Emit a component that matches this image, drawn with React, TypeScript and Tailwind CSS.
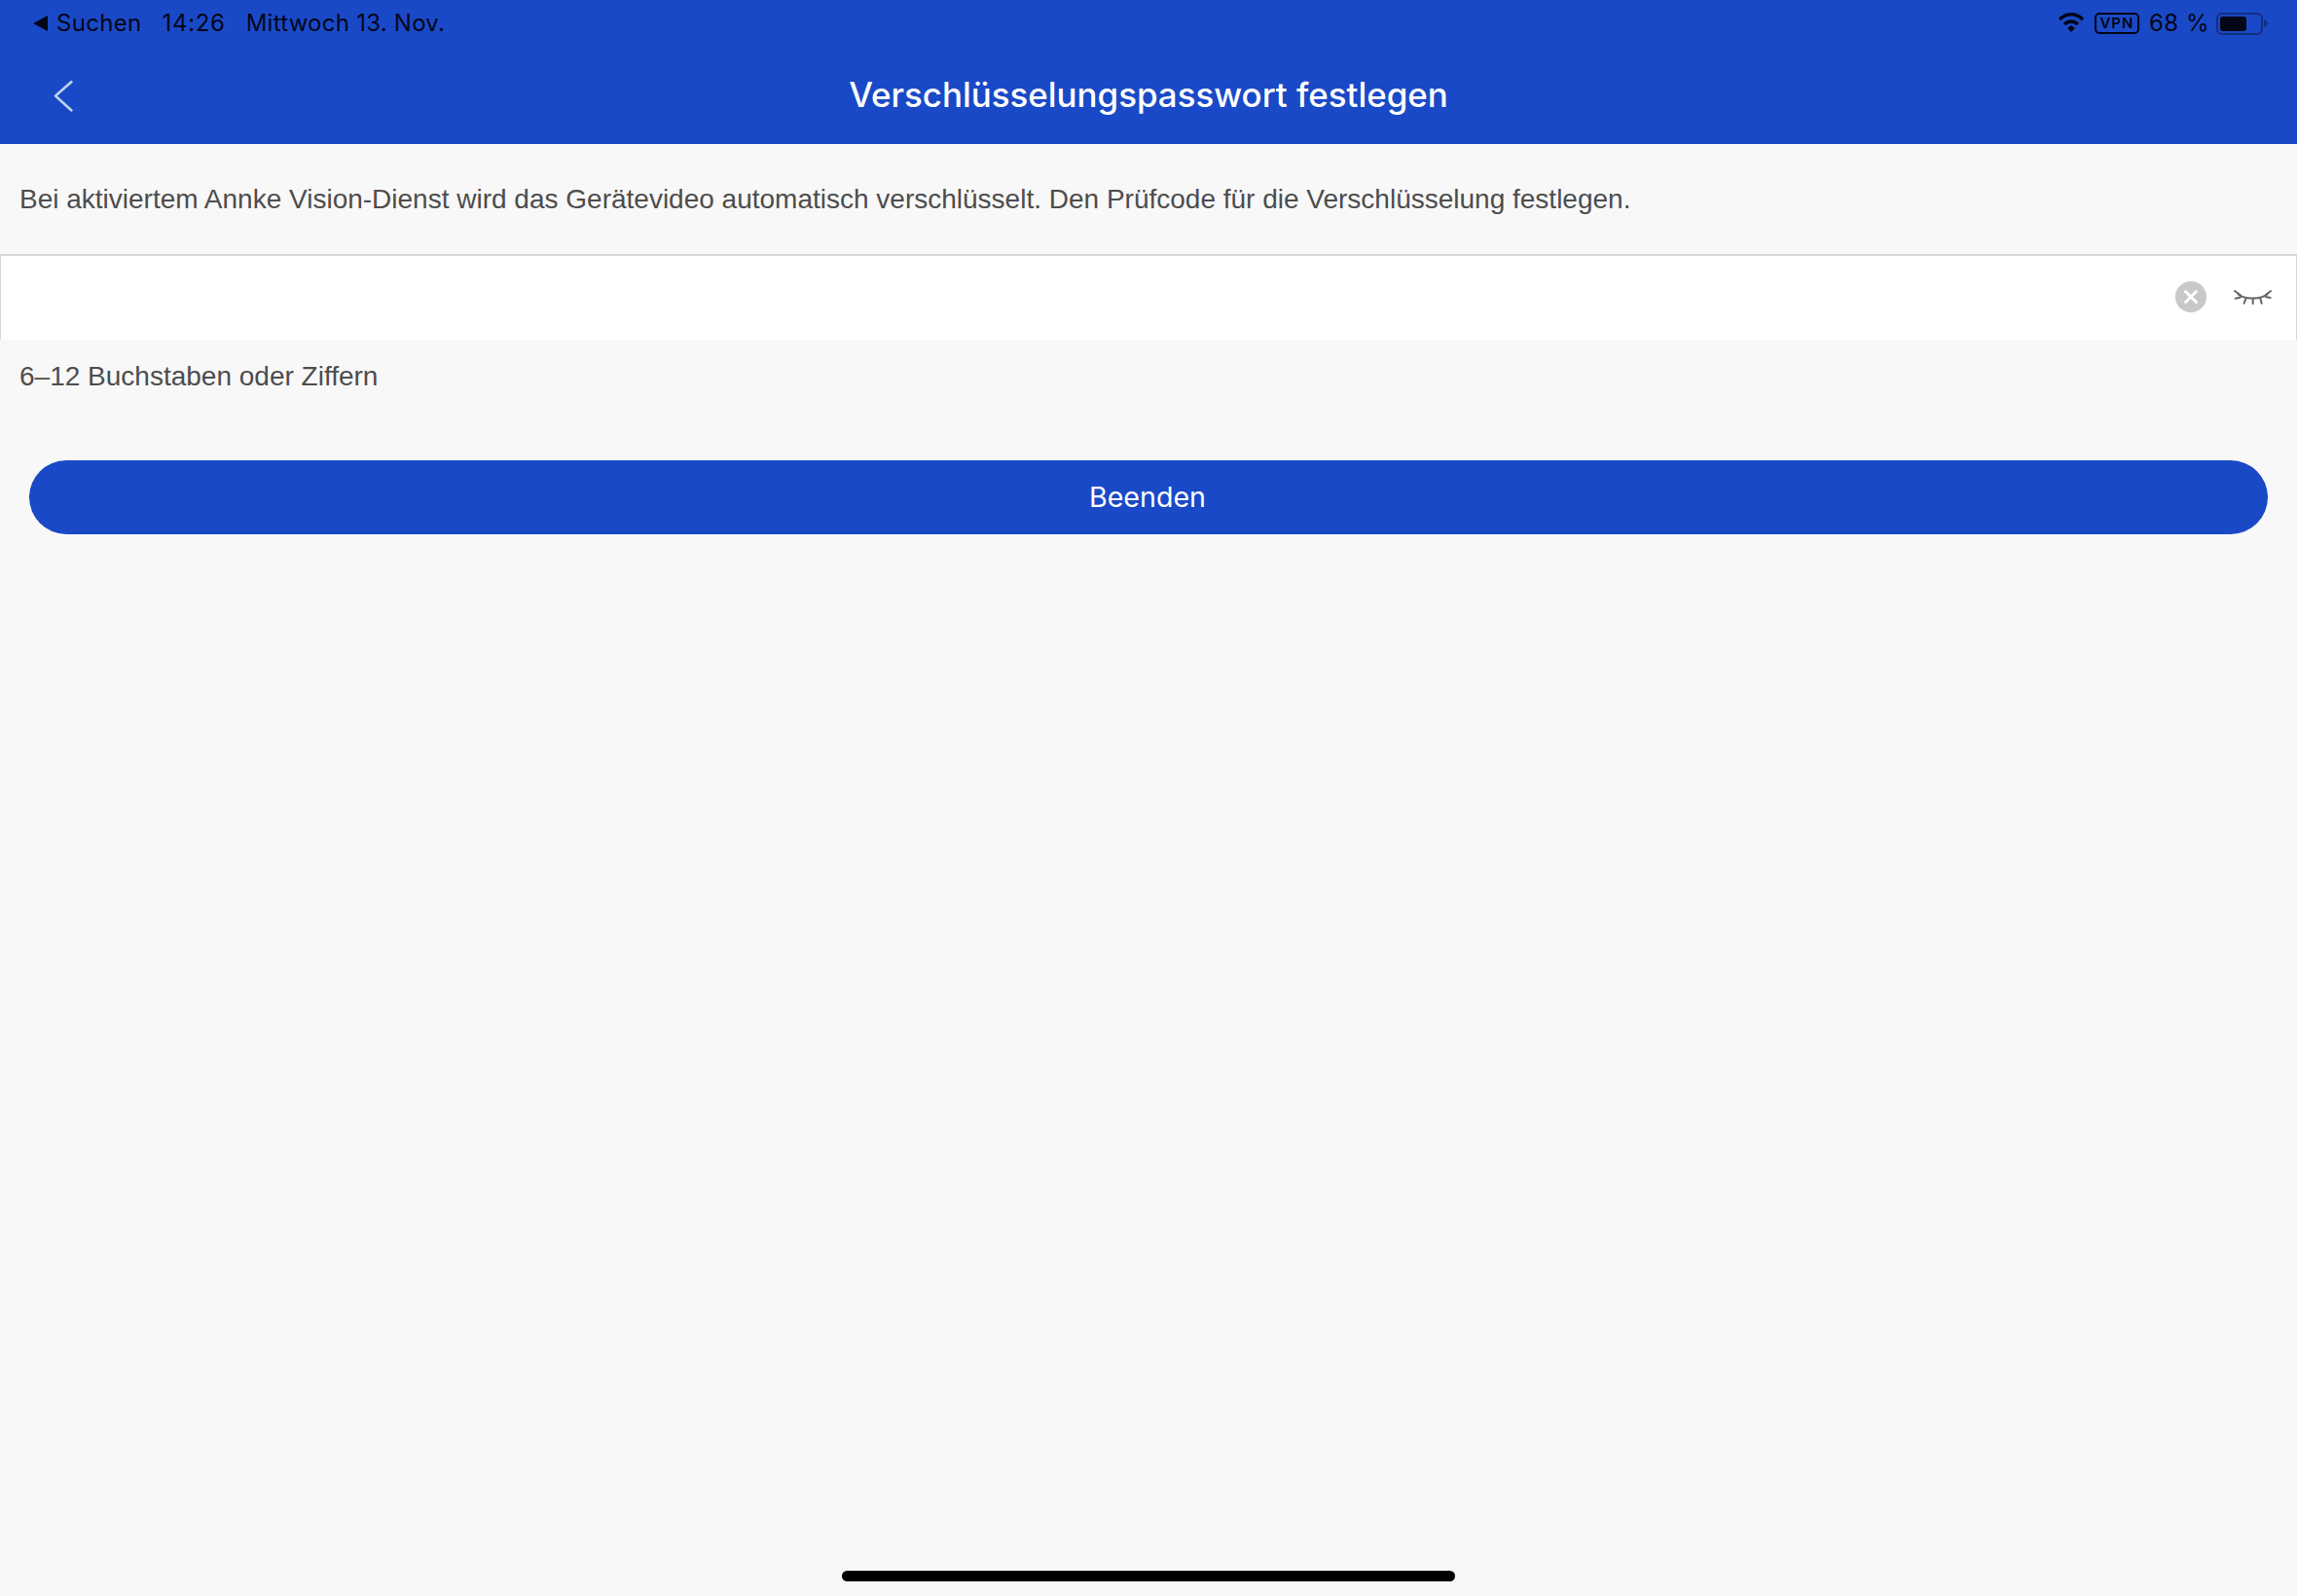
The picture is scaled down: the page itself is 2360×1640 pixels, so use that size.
export default function App() {
  return (
    <div className="relative flex h-[1640px] w-[2360px] flex-col overflow-hidden bg-[#f8f8f8] font-['Liberation_Sans',sans-serif]">
      <header className="flex h-[148px] shrink-0 flex-col bg-[#1a49c7]">
        <div className="flex h-[48px] items-center justify-between pl-[34px] pr-[30px] font-['Inter',sans-serif] text-[24px] text-[#020617]">
          <div className="flex items-center">
            <svg width="15" height="16" viewBox="0 0 15 16" className="mr-[9px]"><path d="M0 8 L15 0 V16 Z" fill="#020617" /></svg>
            <span className="tracking-[0.3px]">Suchen</span>
            <span className="ml-[21px] tracking-[0.7px]">14:26</span>
            <span className="ml-[21px] tracking-[0.25px]">Mittwoch 13. Nov.</span>
          </div>
          <div className="flex items-center">
            <svg width="28" height="22" viewBox="0 0 28 22" className="mr-[10px]">
              <path d="M2 7 C9 0 19 0 26 7" fill="none" stroke="#020617" strokeWidth="3.4" />
              <path d="M7 12 C11 8 17 8 21 12" fill="none" stroke="#020617" strokeWidth="3.4" />
              <path d="M10 16 L14 13 L18 16 L14 20 Z" fill="#020617" />
            </svg>
            <span className="flex h-[22px] w-[46px] items-center justify-center rounded-[5px] border-2 border-[#020617] text-[15px] font-semibold tracking-[1px]">VPN</span>
            <span className="ml-[10px] tracking-[0.5px]">68 %</span>
            <div className="ml-[7px] flex items-center">
              <div className="flex h-[23px] w-[48px] items-center rounded-[6px] border-2 border-[#12307f] p-[2px]">
                <div className="h-full w-[27px] rounded-[3px] bg-[#020617]" />
              </div>
              <svg width="4" height="8" viewBox="0 0 4 8" className="ml-[1px]"><path d="M0 0 C3 1 4 3 4 4 C4 5 3 7 0 8 Z" fill="#12307f" /></svg>
            </div>
          </div>
        </div>
        <div className="relative flex h-[100px] items-center justify-center pb-[2px]">
          <svg width="22" height="34" viewBox="0 0 22 34" className="absolute left-[54px] top-[34px]">
            <path d="M19.5 2 L3 16.5 L19.5 31.5" fill="none" stroke="#c4d0f0" strokeWidth="2.5" strokeLinecap="round" strokeLinejoin="round" />
          </svg>
          <h1 className="font-['Inter',sans-serif] text-[34.9px] font-medium text-white">Verschlüsselungspasswort festlegen</h1>
        </div>
      </header>
      <main className="flex flex-col">
        <p className="pl-[20px] pt-[40px] text-[28px] leading-[34px] text-[#4d4d4d]">
          Bei aktiviertem Annke Vision-Dienst wird das Gerätevideo automatisch verschlüsselt. Den Prüfcode für die Verschlüsselung festlegen.
        </p>
        <div className="mt-[39px] flex h-[88px] items-center justify-end border-x border-t-2 border-[#d8d8d8] bg-white pb-[2px] pr-[24px]">
          <svg width="32" height="32" viewBox="0 0 32 32" className="mr-[27px]">
            <circle cx="16" cy="16" r="16" fill="#c8c8c8" />
            <path d="M10.5 10.5 L21.5 21.5 M21.5 10.5 L10.5 21.5" stroke="#fff" strokeWidth="3" strokeLinecap="round" />
          </svg>
          <svg width="41" height="18" viewBox="0 0 41 18">
            <path d="M5 6 C12 12 29 12 36 6" fill="none" stroke="#666" strokeWidth="2" />
            <path d="M2 3 L7.6 7 M2.7 10.7 L8 9.5 M13.6 10.7 L11.6 15.7 M20.7 11 L20.7 16 M28.3 10.7 L29.7 15.7 M39 3 L34 7 M38.7 10 L34 9" fill="none" stroke="#666" strokeWidth="2" strokeLinecap="round" />
          </svg>
        </div>
        <p className="pl-[20px] pt-[21px] text-[28px] leading-[34px] text-[#4d4d4d]">6–12 Buchstaben oder Ziffern</p>
        <div className="px-[30px] pt-[69px]">
          <button className="flex h-[76px] w-full items-center justify-center rounded-full bg-[#1a49c7] pr-[2px] font-['Inter',sans-serif] text-[28.6px] text-white">
            Beenden
          </button>
        </div>
      </main>
      <div className="absolute left-[865px] top-[1614px] h-[11px] w-[630px] rounded-full bg-black" />
    </div>
  );
}
